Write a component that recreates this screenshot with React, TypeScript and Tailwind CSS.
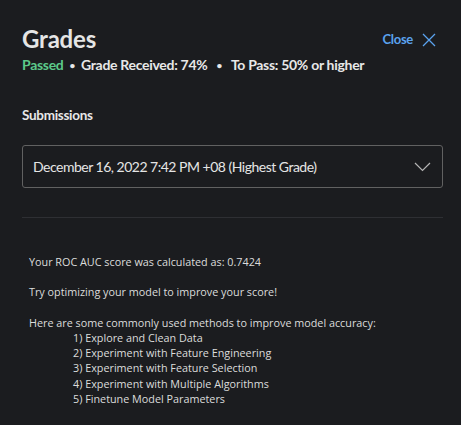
export default function App() {
  const methods = [
    "1) Explore and Clean Data",
    "2) Experiment with Feature Engineering",
    "3) Experiment with Feature Selection",
    "4) Experiment with Multiple Algorithms",
    "5) Finetune Model Parameters",
  ];

  return (
    <div className="min-h-[425px] w-full bg-[#1b1c1f] pl-[22px] pr-[18px] pt-[24px] text-[#e8e8e8] font-['Lato','Noto_Sans',sans-serif]">
      {/* Header */}
      <div className="flex items-start justify-between">
        <h1 className="text-[24px] font-bold leading-[30px] tracking-[-0.2px] text-[#e5e5e5]">Grades</h1>
        <button className="mt-[6px] mr-[7px] flex items-center gap-[9px] text-[13px] font-bold tracking-[-0.3px] text-[#5aa2ee]">
          Close
          <svg width="14" height="14" viewBox="0 0 14 14" fill="none" stroke="#5aa2ee" strokeWidth="1.3">
            <path d="M1 1L13 13M13 1L1 13" />
          </svg>
        </button>
      </div>
      <div className="mt-[1px] flex items-center text-[14px] font-bold leading-[20px] tracking-[-0.3px]">
        <span className="text-[#5cc98a]">Passed</span>
        <span className="mx-[6px] text-[10px]">•</span>
        <span>Grade Received: 74%</span>
        <span className="mx-[9px] text-[10px]">•</span>
        <span>To Pass: 50% or higher</span>
      </div>

      {/* Submissions */}
      <h2 className="mt-[30px] text-[13.5px] font-bold leading-[20px] tracking-[-0.3px]">Submissions</h2>
      <div className="mt-[20px] flex h-[43px] items-center justify-between rounded-[3px] border border-[#616161] pl-[10px] pr-[11px]">
        <span className="text-[14px] leading-[20px] tracking-[-0.5px] text-[#e5e5e5]">December 16, 2022 7:42 PM +08 (Highest Grade)</span>
        <svg width="17" height="10" viewBox="0 0 17 10" fill="none" stroke="#b5b5b5" strokeWidth="1.2">
          <path d="M1 1L8.5 8.5L16 1" />
        </svg>
      </div>

      <div className="mt-[29px] h-px bg-[#2e2f33]" />

      {/* Feedback */}
      <div className="pt-[36px] pl-[7px] text-[10.8px] leading-[15.3px] text-[#dcdcdc] font-['Open_Sans',sans-serif]">
        <p>Your ROC AUC score was calculated as: 0.7424</p>
        <p className="mt-[15px]">Try optimizing your model to improve your score!</p>
        <p className="mt-[15px]">Here are some commonly used methods to improve model accuracy:</p>
        <ul className="pl-[44px]">
          {methods.map((m) => (
            <li key={m}>{m}</li>
          ))}
        </ul>
      </div>
    </div>
  );
}
